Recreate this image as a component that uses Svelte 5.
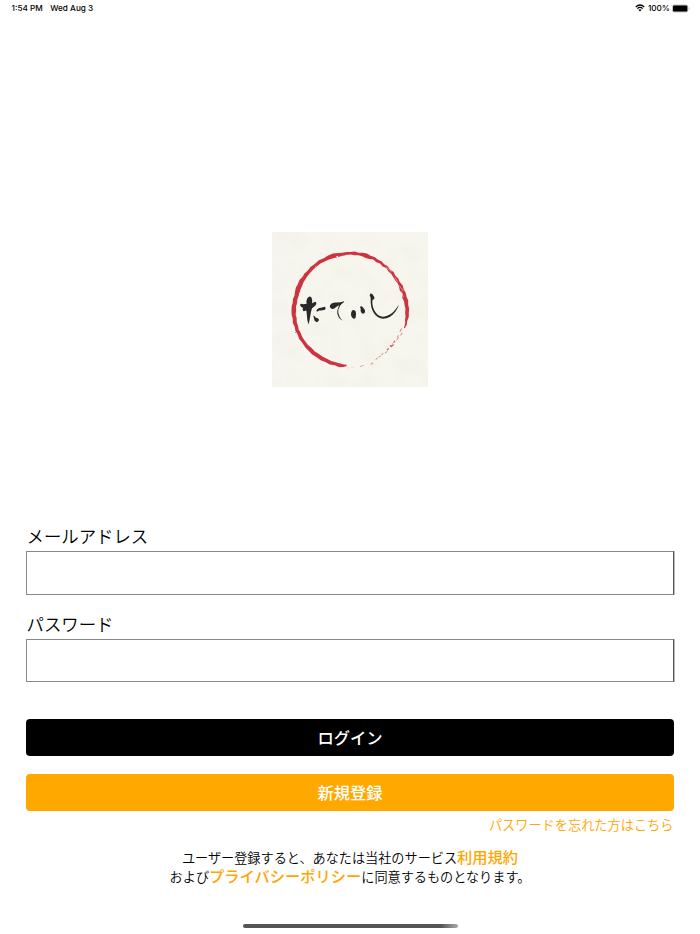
<script lang="ts">
  let email = '';
  let password = '';

  // brush ring: [angle, outer radius, inner radius], clockwise from the right
  const stroke = [
    [94, 167, 163], [97, 171, 163], [101, 173, 162], [106, 171, 161], [111, 173, 162],
    [116, 172, 161], [121, 174, 162], [126, 173, 161], [131, 175, 163], [136, 174, 162],
    [141, 175, 164], [146, 174, 164], [151, 176, 165], [156, 174, 164], [160, 176, 165],
    [164, 174, 164], [168, 177, 165], [172, 175, 163], [176, 177, 165], [180, 177, 163],
    [184, 177, 164], [188, 175, 162], [192, 176, 163], [195, 174, 162], [199, 176, 162],
    [203, 178, 163], [207, 177, 163], [211, 179, 165], [215, 176, 165], [219, 178, 166],
    [223, 176, 166], [228, 178, 167], [233, 177, 167], [238, 179, 168], [243, 177, 167],
    [248, 179, 167], [253, 180, 166], [258, 177, 166], [262, 176, 167], [266, 177, 168],
    [270, 176, 169], [274, 178, 167], [278, 176, 168], [282, 178, 167], [286, 179, 165],
    [290, 176, 165], [294, 177, 168], [298, 174, 165], [302, 175, 167], [306, 172, 164],
    [310, 174, 167], [314, 171, 164], [318, 174, 165], [322, 171, 163], [326, 173, 162],
    [330, 171, 164], [334, 174, 162], [338, 172, 160], [342, 175, 164], [346, 173, 160],
    [350, 176, 163], [354, 174, 163], [358, 176, 165], [362, 175, 164], [366, 176, 166],
    [370, 173, 166], [374, 174, 168], [378, 171, 168]
  ];

  function point(angle: number, r: number) {
    const a = (angle * Math.PI) / 180;
    return `${(247.5 + r * Math.cos(a)).toFixed(1)},${(248.5 + r * Math.sin(a)).toFixed(1)}`;
  }

  const ring = [
    ...stroke.map(([a, outer]) => point(a, outer)),
    ...[...stroke].reverse().map(([a, , inner]) => point(a, inner))
  ].join(' ');
</script>

<div class="screen">
  <header class="status">
    <span>1:54 PM</span>
    <span class="date">Wed Aug 3</span>
    <svg class="wifi" viewBox="0 0 20 16">
      <path d="M1.5 6Q10-2 18.5 6M4.7 9.3Q10 4.3 15.3 9.3" fill="none" stroke="#000" stroke-width="2.6" />
      <path d="M6.7 11.7Q10 8.8 13.3 11.7L10 15z" />
    </svg>
    <span>100%</span>
    <svg class="battery" viewBox="0 0 54 26">
      <rect x="0" y="1" width="49" height="24" rx="7" fill="#c4c4c4" />
      <rect x="3" y="4" width="43" height="18" rx="4" />
      <path d="M51 9q4 4 0 8z" fill="#aaa" />
    </svg>
  </header>

  <div class="logo">
    <svg viewBox="12 12 468 466" preserveAspectRatio="none">
      <defs>
        <filter id="paper" x="0" y="0" width="100%" height="100%">
          <feTurbulence type="fractalNoise" baseFrequency="0.018" numOctaves="4" seed="8" />
          <feColorMatrix values="0 0 0 0 .82  0 0 0 0 .79  0 0 0 0 .7  .6 0 0 0 -.25" />
        </filter>
        <filter id="brush">
          <feTurbulence type="fractalNoise" baseFrequency="0.09" numOctaves="2" seed="3" />
          <feDisplacementMap in="SourceGraphic" scale="5" xChannelSelector="R" yChannelSelector="G" />
        </filter>
      </defs>
      <rect x="12" y="12" width="468" height="466" fill="#f7f6ee" />
      <rect x="12" y="12" width="468" height="466" filter="url(#paper)" />
      <g filter="url(#brush)">
        <polygon points={ring} fill="#cc3441" />
        <g fill="none" stroke="#f7f6ee" stroke-width="1.4">
          <path d="M354 117L371 132M381 149L389 162M392 172L407 190M399 190L407 208M411 187L416 202" />
          <path d="M408 292L402 314M412 281L406 300M99 147L91 160" />
        </g>
        <g fill="none" stroke="#d45c65" stroke-width="2.5">
          <path d="M401 302L396 312M403 315L398 323M391 322L388 329M393 329L385 337" />
          <path d="M380 339L377 345M377 350L368 358M369 352L366 356M362 362L357 367" stroke-width="4" />
          <path d="M358 371L351 376M346 377L340 381M338 385L332 388M329 391L323 395" stroke-width="2.4" />
          <path d="M315 405L308 409M310 410L315 407M287 413L276 417" stroke="#dc8d91" stroke-width="2.4" />
          <path d="M258 418L249 420M240 416V425" stroke="#e8bbba" stroke-width="1.5" />
        </g>
      </g>
      <g fill="#292929">
        <path d="M96 231Q99 226 106 229L116 228Q114 217 118 211Q124 203 130 208Q134 214 132 226L141 222Q147 223 144 231Q140 237 132 241L129 252Q127 264 125 275L122 290L118 277Q117 262 115 248L106 250Q102 244 105 240Q97 238 96 231Z" />
        <path d="M145 249Q149 240 159 240L170 237Q175 239 171 246Q162 249 154 248L147 252Z" />
        <path d="M136 264Q140 263 143 270Q150 269 153 276Q153 282 146 283Q138 280 138 273Z" />
        <path d="M186 232Q190 225 201 224Q215 225 228 220Q230 222 226 224Q214 232 211 244Q209 256 215 267Q218 274 225 279Q213 275 209 261Q205 247 214 232Q206 235 200 241Q194 246 188 241Q184 237 186 232Z" />
        <path d="M252 248Q258 244 263 251Q266 260 263 269Q259 276 253 270Q248 264 249 256Z" />
        <path d="M276 237Q280 232 285 239Q292 245 291 253Q287 260 281 256Q276 250 278 243Z" />
        <path d="M307 197Q312 195 316 203Q322 209 318 214Q314 214 313 219Q312 239 323 254Q333 267 347 267Q369 264 384 243L393 231Q389 243 382 252Q366 273 346 273Q327 272 317 255Q307 239 308 216Q309 208 305 203Z" />
      </g>
    </svg>
  </div>

  <form on:submit|preventDefault>
    <label for="email">メールアドレス</label>
    <input id="email" type="text" bind:value={email} />
    <label for="password">パスワード</label>
    <input id="password" type="password" bind:value={password} />

    <button class="login" type="submit">ログイン</button>
    <button class="register" type="button">新規登録</button>
    <a class="forgot" href="#forgot">パスワードを忘れた方はこちら</a>
  </form>

  <p class="terms">
    <span>ユーザー登録すると、あなたは当社のサービス<a href="#terms">利用規約</a></span>
    <span>および<a href="#privacy">プライバシーポリシー</a>に同意するものとなります。</span>
  </p>

  <div class="home"></div>
</div>

<style>
  :global(body) {
    margin: 0;
    background: #fff;
  }

  .screen {
    display: flex;
    flex-direction: column;
    height: 934px;
    box-sizing: border-box;
    overflow: hidden;
    color: #000;
    font-family: 'Noto Sans CJK JP', sans-serif;
    font-weight: 350;
  }

  .status {
    display: flex;
    align-items: center;
    flex-shrink: 0;
    height: 16px;
    padding: 0 10.5px 0 11.5px;
    font-family: Inter, sans-serif;
    font-size: 8.2px;
    font-weight: 500;
    white-space: nowrap;
  }

  .date {
    margin-left: 7.5px;
  }

  .wifi {
    width: 10px;
    height: 8px;
    margin: 0 3px 0 auto;
  }

  .battery {
    width: 18px;
    height: 9px;
    margin-left: 1.5px;
  }

  .logo {
    flex-shrink: 0;
    height: 155px;
    margin-top: 216px;
    text-align: center;
  }

  .logo svg {
    display: block;
    width: 156px;
    height: 155px;
    margin: 0 auto;
  }

  form {
    display: flex;
    flex-direction: column;
    margin: 137px 26px 0;
  }

  label {
    height: 27px;
    padding-left: 0.5px;
    font-size: 17.4px;
    line-height: 24px;
  }

  input {
    box-sizing: border-box;
    height: 43.5px;
    margin: 0 0 17px;
    padding: 0 10px;
    border: 1px solid #888;
    border-right-color: #555;
    border-radius: 0;
    outline: none;
    background: #fff;
    box-shadow: 1px 0 #bbb;
    font-size: 17px;
  }

  button {
    height: 37.5px;
    padding: 0;
    border: 0;
    border-radius: 4px;
    color: #fff;
    font-family: inherit;
    font-size: 16.3px;
    font-weight: 500;
    line-height: 37px;
  }

  .login {
    margin-top: 19.7px;
    background: #000;
  }

  .register {
    margin-top: 17.5px;
    background: #ffa800;
  }

  a {
    color: #ffa500;
    text-decoration: none;
  }

  .forgot {
    align-self: flex-end;
    margin: 3px 0.5px 0 0;
    font-size: 13.2px;
    line-height: 21px;
  }

  .terms {
    margin: 12.5px 0 0;
    font-size: 13.15px;
    line-height: 19px;
    text-align: center;
  }

  .terms span {
    display: block;
    height: 19px;
  }

  .terms a {
    font-size: 15.25px;
    font-weight: 500;
    line-height: 1;
  }

  .home {
    width: 215px;
    height: 4px;
    margin: auto auto 6px;
    border-radius: 2px;
    background: linear-gradient(90deg, #555 92%, #aaa);
  }
</style>
